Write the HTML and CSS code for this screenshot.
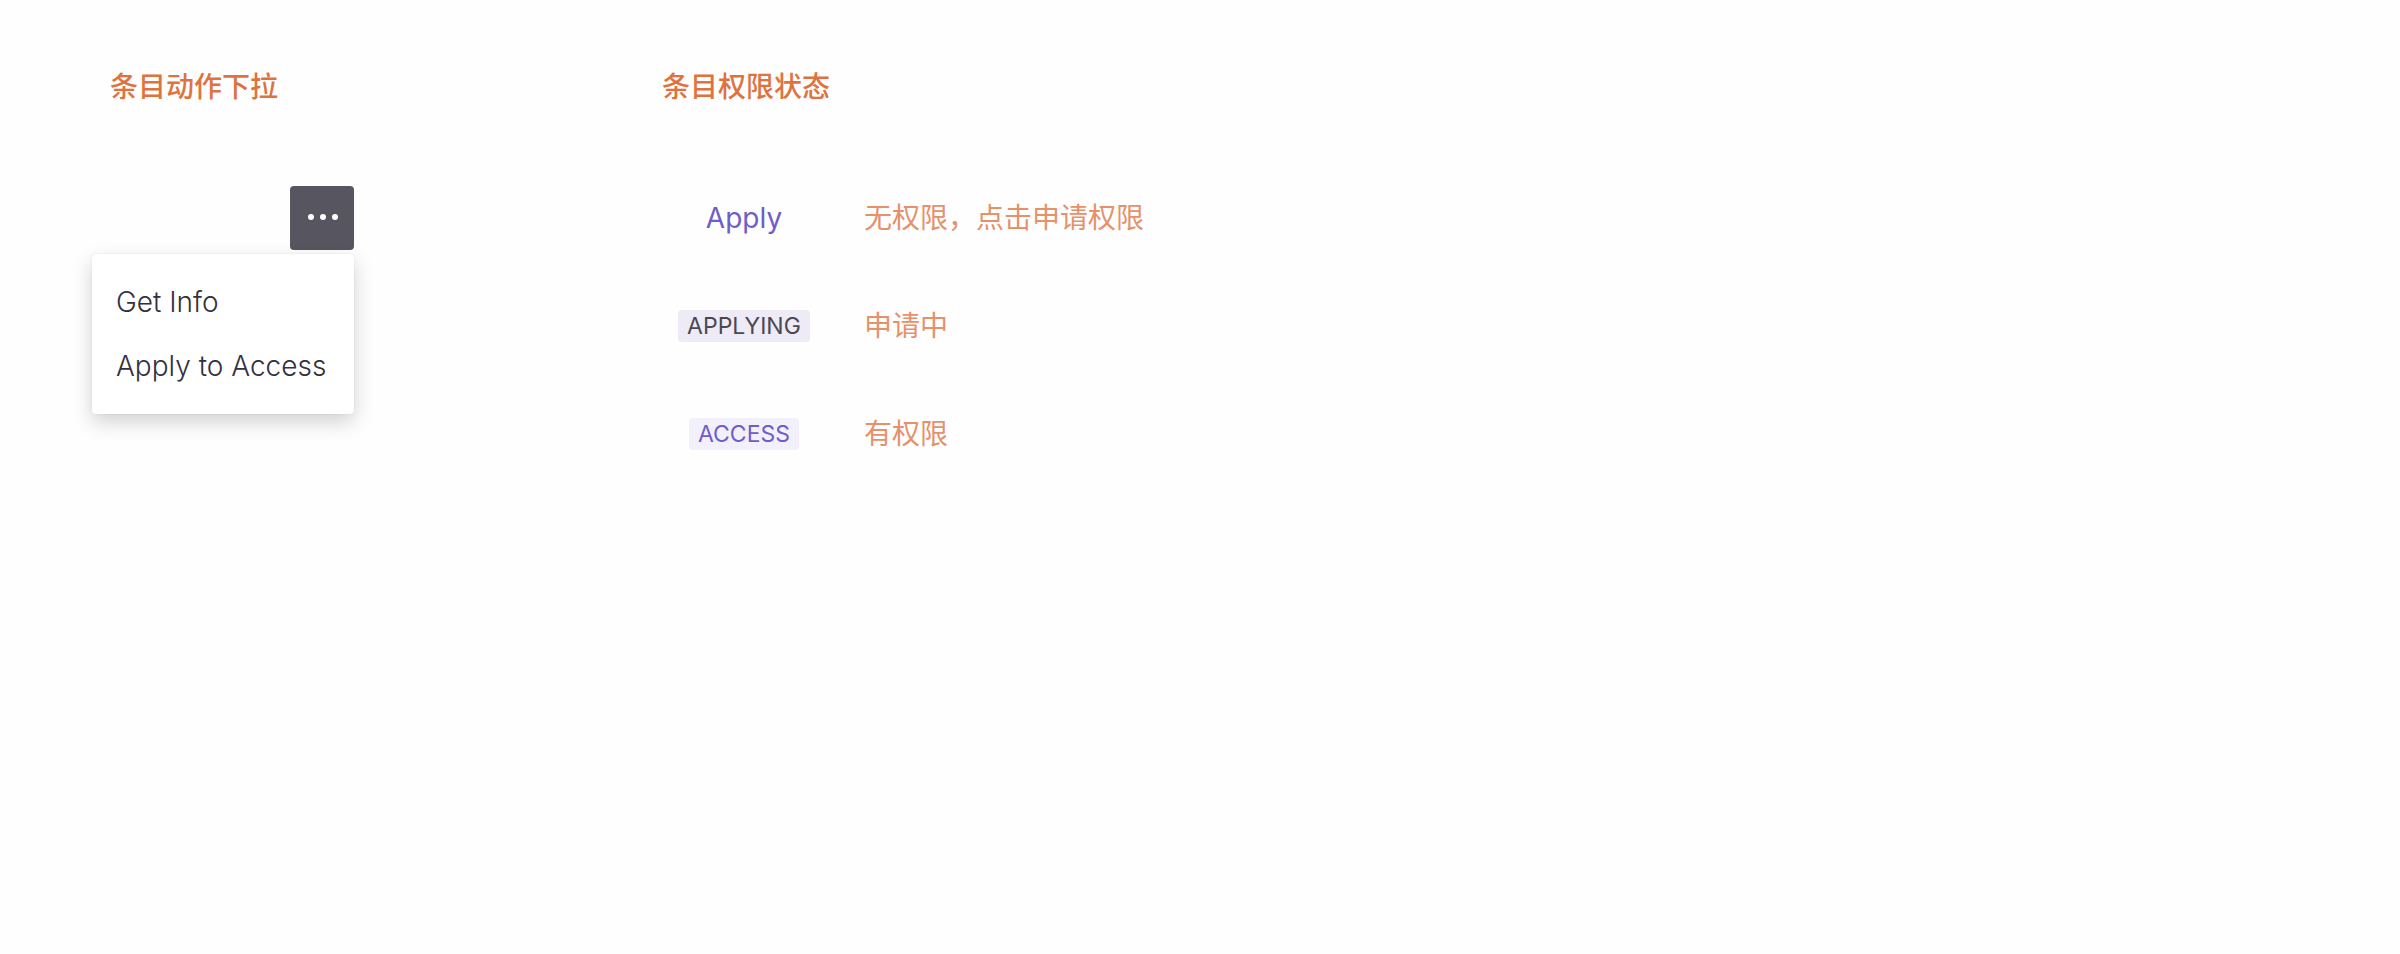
FILE: index.html
```html
<!DOCTYPE html>
<html lang="zh-CN">
<head>
<meta charset="utf-8">
<meta name="viewport" content="width=device-width, initial-scale=1">
<title>条目动作与权限状态</title>
<link rel="stylesheet" href="styles.css">
</head>
<body>
<main class="board">
  <section class="actions">
    <h2 class="heading">条目动作下拉</h2>
    <div class="dropdown">
      <button class="more" type="button" aria-label="More" aria-haspopup="menu" aria-expanded="true">
        <svg class="more-icon" viewBox="0 0 32 32" aria-hidden="true">
          <circle cx="5" cy="15" r="3"/>
          <circle cx="17" cy="15" r="3"/>
          <circle cx="29" cy="15" r="3"/>
        </svg>
      </button>
      <div class="menu" role="menu">
        <button class="menu-item" type="button" role="menuitem">Get Info</button>
        <button class="menu-item" type="button" role="menuitem">Apply to Access</button>
      </div>
    </div>
  </section>
  <section class="permissions">
    <h2 class="heading">条目权限状态</h2>
    <ul class="states">
      <li class="state">
        <div class="status"><button class="apply" type="button">Apply</button></div>
        <p class="note">无权限，点击申请权限</p>
      </li>
      <li class="state">
        <div class="status"><span class="tag tag-applying">APPLYING</span></div>
        <p class="note">申请中</p>
      </li>
      <li class="state">
        <div class="status"><span class="tag tag-access">ACCESS</span></div>
        <p class="note">有权限</p>
      </li>
    </ul>
  </section>
</main>
</body>
</html>
```
FILE: styles.css
```css
* {
  box-sizing: border-box;
}

body {
  margin: 0;
  background: #fefefe;
  font-family: Inter, "Noto Sans CJK SC", sans-serif;
  font-size: 28px;
  line-height: 40px;
}

button {
  border: 0;
  background: none;
  font: inherit;
  cursor: pointer;
}

.board {
  display: flex;
  gap: 308px;
  padding: 67px 92px;
}

.heading {
  margin: 0 0 79px;
  color: #df733f;
  font-size: 28px;
  font-weight: 500;
  line-height: 40px;
}

.actions .heading {
  padding-left: 18px;
}

.dropdown {
  display: flex;
  flex-direction: column;
  align-items: flex-end;
  gap: 4px;
}

.more {
  display: flex;
  align-items: center;
  justify-content: center;
  width: 64px;
  height: 64px;
  padding: 0;
  border-radius: 4px;
  background: #57555f;
}

.more-icon {
  width: 32px;
  height: 32px;
  fill: #fff;
}

.menu {
  display: flex;
  flex-direction: column;
  min-width: 262px;
  padding: 16px 0;
  border-radius: 4px;
  background: #fff;
  box-shadow: 0 8px 20px rgba(0, 0, 0, 0.18), 0 0 2px rgba(0, 0, 0, 0.08);
}

.menu-item {
  padding: 12px 24px;
  color: #33313d;
  font-weight: 300;
  text-align: left;
  white-space: nowrap;
}

.states {
  display: flex;
  flex-direction: column;
  gap: 68px;
  margin: 0;
  padding: 12px 0 0 16px;
  list-style: none;
}

.state {
  display: grid;
  grid-template-columns: 132px auto;
  column-gap: 54px;
  align-items: center;
}

.status {
  display: flex;
  justify-content: center;
}

.apply {
  padding: 0;
  color: #6f5dc8;
}

.tag {
  padding: 0 9px;
  border-radius: 4px;
  font-size: 23px;
  line-height: 32px;
}

.tag-applying {
  background: #eeebf7;
  color: #4a4853;
}

.tag-access {
  background: #f2f0fa;
  color: #6f5dc8;
}

.note {
  margin: 0;
  color: #e5916a;
}
```
